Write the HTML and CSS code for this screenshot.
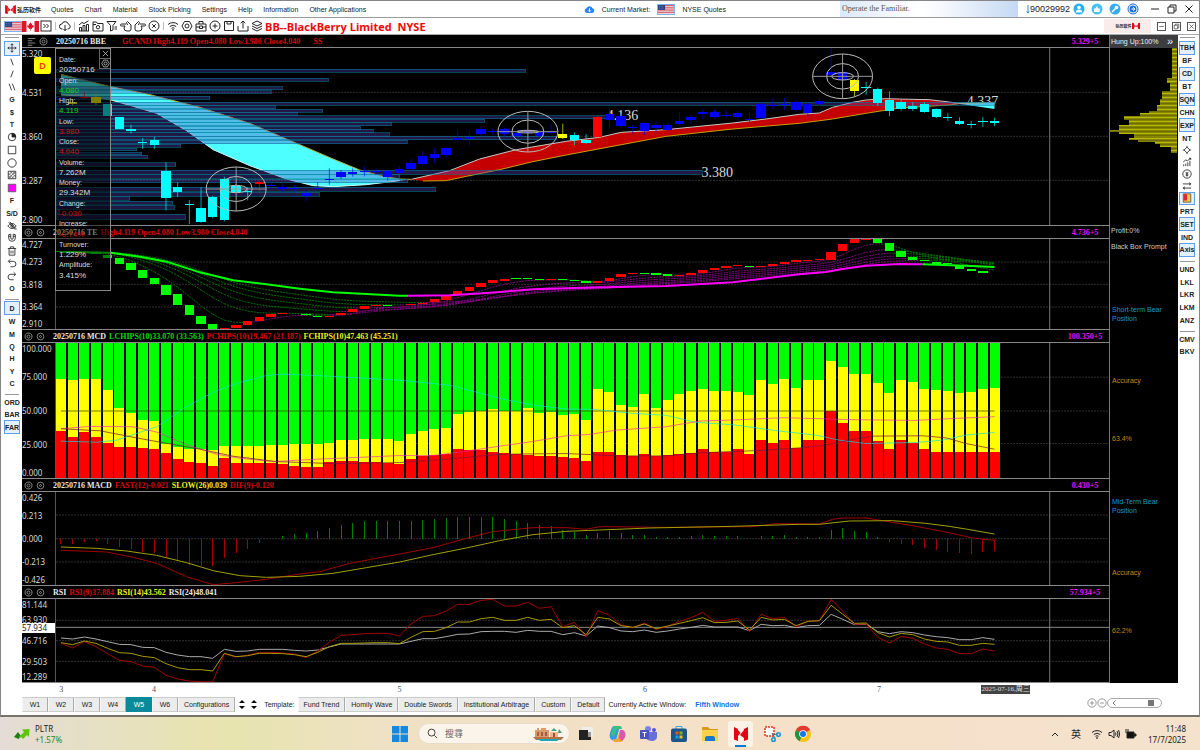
FILE: index.html
```
<!DOCTYPE html>
<html lang="en">
<head>
    <meta charset="UTF-8">
    <meta name="viewport" content="width=device-width, initial-scale=1.0">
    <title>BB--BlackBerry Limited</title>
    <link rel="stylesheet" href="styles.css">
</head>
<body>
    <svg class="symbols" aria-hidden="true">
        <symbol id="us" viewBox="0 0 18 10" preserveAspectRatio="none">
            <rect width="18" height="10" fill="#f4e9ea"/>
            <path d="M0 .5h18M0 2.5h18M0 4.5h18M0 6.5h18M0 8.5h18" stroke="#d0455a"/>
            <rect width="8" height="5.5" fill="#2d4486"/>
            <path d="M1 1.5h6M1 3.5h6" stroke="#8f9cc4" stroke-width=".6" stroke-dasharray="1 1"/>
        </symbol>
        <symbol id="ca" viewBox="0 0 17 10" preserveAspectRatio="none">
            <rect width="17" height="10" fill="#fff"/>
            <path d="M0 0h4.500v10h-4.500zM12.500 0h4.500v10h-4.500z" fill="#e0132b"/>
            <path d="M8.500 1l.8 1.600 1-.4-.3 1.800 1.500-.6-.2 1 .7.5-2 1.700.1.700-1.300-.2v1.700h-.6v-1.700l-1.300.2.1-.7-2-1.700.7-.5-.2-1 1.500.6-.3-1.800 1 .4z" fill="#e0132b"/>
        </symbol>
        <symbol id="logo" viewBox="0 0 12 10"><path d="M0 0l3 1v9l-3-.5zM9 1l3-1v10l-3-1zM3.500 2.500l2.500 3 2.500-3v5l-2.500-2-2.500 2z" fill="#e60012"/></symbol>
        <symbol id="more" viewBox="0 0 12 12"><rect x="1" y="1" width="10" height="10"/><path d="M3.500 4l2 2-2 2M6.500 4l2 2-2 2"/></symbol>
        <symbol id="cloud" viewBox="0 0 12 12"><path d="M3.500 9H3a2.500 2.500 0 0 1-.2-5 3.500 3.500 0 0 1 6.700.3A2.400 2.400 0 0 1 9 9h-.5M6 5v5.500M4.500 9L6 10.700 7.500 9"/></symbol>
        <symbol id="stats" viewBox="0 0 12 12"><path d="M1.500 11V7.500h2V11M5 11V5.500h2V11M8.500 11V4.500h2V11M1 5l3-2.500 2 1L10.500.8M1 11h10"/></symbol>
        <symbol id="folder" viewBox="0 0 12 12"><path d="M1 2h3.500l1 1.500H11V11H1zM1 4.500h3"/><circle cx="6" cy="7.200" r="1.700"/></symbol>
        <symbol id="funnel" viewBox="0 0 12 12"><path d="M1 1.500h9L7 5.500V10L4.500 11V5.500zM8.500 7h2.500M8.500 9h2.500"/></symbol>
        <symbol id="handl" viewBox="0 0 12 12"><path d="M6 4H1.500a1 1 0 0 0 0 2H5L4 8a3 3 0 0 0 3 3h2a2 2 0 0 0 2-2V5L7.500 1.500 6.500 2.500 7.500 5"/></symbol>
        <symbol id="handr" viewBox="0 0 12 12"><path d="M6 4h4.500a1 1 0 0 1 0 2H7l1 2a3 3 0 0 1-3 3H3a2 2 0 0 1-2-2V5l3.500-3.500 1 1L4.500 5"/></symbol>
        <symbol id="xcircle" viewBox="0 0 12 12"><circle cx="6" cy="6" r="5"/><path d="M4.200 4.200l3.600 3.600M7.800 4.200L4.200 7.800"/></symbol>
        <symbol id="pcircle" viewBox="0 0 12 12"><circle cx="6" cy="6" r="5"/><path d="M6 3.500v5M3.500 6h5"/></symbol>
        <symbol id="mcircle" viewBox="0 0 12 12"><circle cx="6" cy="6" r="5"/><path d="M3.500 6h5"/></symbol>
        <symbol id="wifi" viewBox="0 0 12 12"><path d="M1 4.500a7.500 7.500 0 0 1 10 0M2.800 6.500a5 5 0 0 1 6.400 0M4.500 8.300a2.400 2.400 0 0 1 3 0"/><circle cx="6" cy="10" r=".5"/></symbol>
        <symbol id="gear" viewBox="0 0 12 12"><path d="M3.500 1.500h5L11 6l-2.500 4.500h-5L1 6z"/><circle cx="6" cy="6" r="2"/></symbol>
        <symbol id="case" viewBox="0 0 12 12"><path d="M1 4h10v7H1zM4 4V1.500h4V4M1 7h3.500M7.500 7H11M4.500 6h3v2.500h-3z"/></symbol>
        <symbol id="save" viewBox="0 0 12 12"><path d="M1.500 1.500h9v9h-9zM4 1.500V4h4V1.500"/></symbol>
        <symbol id="export" viewBox="0 0 12 12"><path d="M1 6v5h10V6M6 8.500V1M3.700 3.200L6 1l2.300 2.200"/></symbol>
        <symbol id="layers" viewBox="0 0 12 12"><path d="M6 1l5 2.500L6 6 1 3.500zM1 6l5 2.500L11 6M1 8.500L6 11l5-2.500"/></symbol>
        <symbol id="move" viewBox="0 0 12 12"><path d="M6 1v10M1 6h10M4.500 2.500L6 1l1.500 1.500M4.500 9.500L6 11l1.500-1.500M2.500 4.500L1 6l1.500 1.500M9.500 4.500L11 6 9.500 7.500"/></symbol>
        <symbol id="bslash" viewBox="0 0 12 12"><path d="M4.500 2l3 8"/></symbol>
        <symbol id="fslash" viewBox="0 0 12 12"><path d="M7.500 2l-3 8"/></symbol>
        <symbol id="slashes" viewBox="0 0 12 12"><path d="M2.500 2l3 8M6.500 2l3 8"/></symbol>
        <symbol id="pie" viewBox="0 0 12 12"><circle cx="6" cy="6" r="4.500"/><path d="M6 1.500V6h4.500a4.500 4.500 0 0 0-4.500-4.500z" fill="#222"/></symbol>
        <symbol id="square" viewBox="0 0 12 12"><path d="M1.500 1.500h9v9h-9z"/></symbol>
        <symbol id="circle" viewBox="0 0 12 12"><circle cx="6" cy="6" r="5"/></symbol>
        <symbol id="hatch" viewBox="0 0 12 12"><path d="M1.500 1.500h9v9h-9z"/><path stroke-width=".7" d="M2 4l6 6M2 7l3 3M4 2l6 6M7 2l3 3M2 6l4-4M2 10l8-8M6 10l4-4"/></symbol>
        <symbol id="fill" viewBox="0 0 12 12"><path d="M1.500 1.500h9v9h-9z" fill="#f0f" stroke="#555"/></symbol>
        <symbol id="eye" viewBox="0 0 12 12"><path d="M1 6c3-4 7-4 10 0-3 4-7 4-10 0zM2 1.500l8 9M3.500 1l8 9"/><circle cx="6" cy="6" r="1.500"/></symbol>
        <symbol id="magnet" viewBox="0 0 12 12"><path d="M2 2l2.500-.5V6a1.500 1.500 0 0 0 3 0V1.500L10 2v4a4 4 0 0 1-8 0zM2 4h2.500M7.500 4H10"/></symbol>
        <symbol id="trash" viewBox="0 0 12 12"><path d="M1 3h10M4 3V1h4v2M2.500 3v8h7V3M4.800 5.500v3.500M7.200 5.500v3.500"/></symbol>
        <symbol id="undo" viewBox="0 0 12 12"><path d="M4 1.500L1.500 4 4 6.500M2 4h5.500a3 3 0 0 1 0 6.500H4"/></symbol>
        <symbol id="redo" viewBox="0 0 12 12"><path d="M8 1.500L10.500 4 8 6.500M10 4H4.500a3 3 0 0 0 0 6.500H8"/></symbol>
        <symbol id="diamond" viewBox="0 0 12 12"><path d="M6 1v2M6 9v2M1 6h2M9 6h2M6 2.500L2.500 6 6 9.500 9.500 6z"/></symbol>
        <symbol id="trend" viewBox="0 0 12 12"><path d="M2 11V9M4.500 11V8M7 11V6.500M9.500 11V4.500M1.500 6l3-2.500 2 1 4-3M8.500 1.500h2v2"/></symbol>
        <symbol id="coin" viewBox="0 0 12 12"><circle cx="6" cy="6" r="5"/><path d="M4.500 3.500L6 5.500l1.500-2M6 5.500V9M4.500 6h3M4.500 7.500h3"/></symbol>
        <symbol id="swap" viewBox="0 0 12 12"><path d="M1 3.500h10M8.500 2l2 1.500-2 1.500M11 8.500H1M3.500 7l-2 1.500 2 1.500"/></symbol>
        <symbol id="news" viewBox="0 0 12 12"><path d="M1.500 1h9v10h-9z" fill="#f7c93c" stroke="#555"/><path d="M2 1.500h4v7.500H2z" fill="#e0252c" stroke="none"/></symbol>
        <symbol id="list" viewBox="0 0 12 12"><path d="M1 2h10M1 5h6M1 8h10M1 11h6"/></symbol>
        <symbol id="ring" viewBox="0 0 12 12"><path d="M4 1.500h4L10.500 4v4L8 10.500H4L1.500 8V4z"/><circle cx="6" cy="6" r="2"/></symbol>
        <symbol id="dot" viewBox="0 0 12 12"><circle cx="6" cy="6" r="4.500"/><circle cx="6" cy="6" r="1.300"/></symbol>
        <symbol id="min" viewBox="0 0 12 12"><path d="M2 6h8"/></symbol>
        <symbol id="restore" viewBox="0 0 12 12"><path d="M2 4h6v6H2zM4 4V2h6v6H8"/></symbol>
        <symbol id="close" viewBox="0 0 12 12"><path d="M2.500 2.500l7 7M9.500 2.500l-7 7"/></symbol>
    </svg>

    <div class="window">
        <header class="menubar">
            <div class="brand"><svg class="brand-mark"><use href="#logo"/></svg><span>弘历软件</span></div>
            <nav class="menu">
                <a href="#">Quotes</a>
                <a href="#">Chart</a>
                <a href="#">Material</a>
                <a href="#">Stock Picking</a>
                <a href="#">Settings</a>
                <a href="#">Help</a>
                <a href="#">Information</a>
                <a href="#">Other Applications</a>
            </nav>
            <div class="market">
                <svg class="market-cloud" viewBox="0 0 12 10"><path d="M3 9a2.700 2.700 0 0 1-.3-5.300 3.500 3.500 0 0 1 6.600 0A2.700 2.700 0 0 1 9 9z" fill="#2a86f0"/><path d="M6 3.500v4M4.500 6L6 7.500 7.500 6" stroke="#fff" fill="none"/></svg>
                <span>Current Market:</span>
                <svg class="flag framed"><use href="#us"/></svg>
                <span>NYSE Quotes</span>
            </div>
            <div class="ticker">Operate the Familiar.</div>
            <div class="account">
                <svg class="pin" viewBox="0 0 4 10"><path d="M2 0v9M.5 7L2 9l1.500-2" stroke="#2a86d0" fill="none"/></svg>
                <span>90029992</span>
                <button type="button" class="round" aria-label="User"><svg viewBox="0 0 12 12"><circle cx="6" cy="6" r="5.500" fill="#27b1f2"/><circle cx="6" cy="4.500" r="1.800" fill="#fff"/><path d="M2.800 9.500a3.200 3 0 0 1 6.400 0z" fill="#fff"/></svg></button>
                <button type="button" class="round" aria-label="Favourites"><svg viewBox="0 0 12 12"><circle cx="6" cy="6" r="5.500" fill="#45c3f5"/><path d="M3 5.500h1.500L6 3l1 2.500h2L8.500 9H3z" fill="#fff"/></svg></button>
                <button type="button" class="round" aria-label="Tools"><svg viewBox="0 0 12 12"><circle cx="6" cy="6" r="5.500" fill="#35aef0"/><path d="M3 9l3.500-3.500" stroke="#fff" stroke-width="1.500"/><circle cx="7.500" cy="4.500" r="1.800" fill="#fff"/></svg></button>
                <button type="button" class="round" aria-label="Support"><svg viewBox="0 0 12 12"><circle cx="6" cy="6" r="5" fill="#fff" stroke="#1568d8"/><circle cx="6" cy="6" r="3.500" fill="#1a72e0"/><path d="M4.500 6h3M6 4.500c2 0 2 3 0 3" stroke="#fff" fill="none"/></svg></button>
            </div>
            <div class="window-buttons">
                <button type="button" aria-label="Minimise"><svg class="ico"><use href="#min"/></svg></button>
                <button type="button" aria-label="Restore"><svg class="ico"><use href="#restore"/></svg></button>
                <button type="button" aria-label="Close"><svg class="ico"><use href="#close"/></svg></button>
            </div>
        </header>

        <div class="toolbar">
            <svg class="flag framed"><use href="#us"/></svg>
            <svg class="flag"><use href="#ca"/></svg>
            <button type="button" aria-label="More"><svg class="ico"><use href="#more"/></svg></button>
            <i class="sep"></i>
            <button type="button" aria-label="Download"><svg class="ico"><use href="#cloud"/></svg></button>
            <i class="sep"></i>
            <button type="button" aria-label="Statistics"><svg class="ico"><use href="#stats"/></svg></button>
            <button type="button" aria-label="Folder"><svg class="ico"><use href="#folder"/></svg></button>
            <button type="button" aria-label="Filter"><svg class="ico"><use href="#funnel"/></svg></button>
            <button type="button" aria-label="Back"><svg class="ico"><use href="#handl"/></svg></button>
            <button type="button" aria-label="Forward"><svg class="ico"><use href="#handr"/></svg></button>
            <button type="button" aria-label="Cancel"><svg class="ico"><use href="#xcircle"/></svg></button>
            <i class="sep"></i>
            <button type="button" aria-label="Signal"><svg class="ico"><use href="#wifi"/></svg></button>
            <button type="button" aria-label="Options"><svg class="ico"><use href="#gear"/></svg></button>
            <button type="button" aria-label="Portfolio"><svg class="ico"><use href="#case"/></svg></button>
            <button type="button" aria-label="Add"><svg class="ico"><use href="#pcircle"/></svg></button>
            <button type="button" aria-label="Save"><svg class="ico"><use href="#save"/></svg></button>
            <button type="button" aria-label="Export"><svg class="ico"><use href="#export"/></svg></button>
            <button type="button" aria-label="Layers"><svg class="ico"><use href="#layers"/></svg></button>
            <h1>BB--BlackBerry Limited <span>NYSE</span></h1>
            <div class="badge"><span>弘历软件</span><svg class="badge-mark"><use href="#logo"/></svg></div>
            <div class="mdi">
                <button type="button" aria-label="Minimise chart"><svg class="ico"><use href="#min"/></svg></button>
                <button type="button" aria-label="Restore chart"><svg class="ico"><use href="#restore"/></svg></button>
                <button type="button" aria-label="Close chart"><svg class="ico"><use href="#close"/></svg></button>
            </div>
        </div>

        <div class="work">
            <aside class="rail">
                <i class="grip"></i>
                <div class="group group-20">
                    <button type="button" class="on" aria-label="Move"><svg class="ico"><use href="#move"/></svg></button>
                    <button type="button" aria-label="Line down"><svg class="ico"><use href="#bslash"/></svg></button>
                    <button type="button" aria-label="Line up"><svg class="ico"><use href="#fslash"/></svg></button>
                    <button type="button" aria-label="Parallel lines"><svg class="ico"><use href="#slashes"/></svg></button>
                    <button type="button">G</button>
                    <button type="button">$</button>
                    <button type="button">T</button>
                    <button type="button" aria-label="Cycle"><svg class="ico"><use href="#pie"/></svg></button>
                    <button type="button" aria-label="Rectangle"><svg class="ico"><use href="#square"/></svg></button>
                    <button type="button" aria-label="Circle"><svg class="ico"><use href="#circle"/></svg></button>
                    <button type="button" aria-label="Hatch"><svg class="ico"><use href="#hatch"/></svg></button>
                    <button type="button" aria-label="Colour"><svg class="ico"><use href="#fill"/></svg></button>
                    <button type="button">F</button>
                    <button type="button">S/D</button>
                    <button type="button" aria-label="Hide"><svg class="ico"><use href="#eye"/></svg></button>
                    <button type="button" aria-label="Magnet"><svg class="ico"><use href="#magnet"/></svg></button>
                    <button type="button" aria-label="Delete"><svg class="ico"><use href="#trash"/></svg></button>
                    <button type="button" aria-label="Undo"><svg class="ico"><use href="#undo"/></svg></button>
                    <button type="button" aria-label="Redo"><svg class="ico"><use href="#redo"/></svg></button>
                    <button type="button">O</button>
                </div>
                <i class="rule"></i>
                <div class="group group-7">
                    <button type="button" class="on">D</button>
                    <button type="button">W</button>
                    <button type="button">M</button>
                    <button type="button">Q</button>
                    <button type="button">H</button>
                    <button type="button">Y</button>
                    <button type="button">C</button>
                </div>
                <i class="rule"></i>
                <div class="group group-3">
                    <button type="button">ORD</button>
                    <button type="button">BAR</button>
                    <button type="button" class="on">FAR</button>
                </div>
            </aside>

            <main class="charts">
                <section class="pane pane-price">
                    <div class="legend">
                        <svg class="ico"><use href="#list"/></svg><svg class="ico"><use href="#ring"/></svg>
                        <b class="white symbol">20250716 BBE</b><b class="red">GCAND High4.119 Open4.080 Low3.980 Close4.040</b><b class="red ss">SS</b>
                        <b class="scale">5.329+5</b>
                    </div>
                    <div class="body">
                        <div class="axis"><span>5.320</span><span>4.531</span><span>3.860</span><span>3.287</span><span>2.800</span></div>
                        <div class="plot">
                            <span class="price" style="left:52.300%;top:34%">4.136</span>
                            <span class="price" style="left:61.300%;top:66%">3.380</span>
                            <span class="price" style="left:86.500%;top:26%">4.337</span>
                            <svg id="price" viewBox="168 147 3162 531" preserveAspectRatio="none"></svg>
                        </div>
                    </div>
                </section>
                <section class="pane pane-te">
                    <div class="legend">
                        <svg class="ico"><use href="#ring"/></svg><svg class="ico"><use href="#dot"/></svg>
                        <b class="white">20250716 TE</b><b class="red">High4.119 Open4.080 Low3.980 Close4.040</b>
                        <b class="scale">4.736+5</b>
                    </div>
                    <div class="body">
                        <div class="axis"><span>4.727</span><span>4.273</span><span>3.818</span><span>3.364</span><span>2.910</span></div>
                        <div class="plot"><svg id="te" viewBox="168 27 3162 270" preserveAspectRatio="none"></svg></div>
                    </div>
                </section>
                <section class="pane pane-mcd">
                    <div class="legend">
                        <svg class="ico"><use href="#ring"/></svg><svg class="ico"><use href="#dot"/></svg>
                        <b class="white">20250716 MCD</b><b class="green">LCHIPS(10)33.070 (33.563)</b><b class="red">PCHIPS(10)19.467 (21.187)</b><b class="yellow">FCHIPS(10)47.463 (45.251)</b>
                        <b class="scale">100.350+5</b>
                    </div>
                    <div class="body">
                        <div class="axis"><span>100.000</span><span>75.000</span><span>50.000</span><span>25.000</span><span>0.000</span></div>
                        <div class="plot"><svg id="mcd" viewBox="168 340 3162 403" preserveAspectRatio="none"></svg></div>
                    </div>
                </section>
                <section class="pane pane-macd">
                    <div class="legend">
                        <svg class="ico"><use href="#ring"/></svg><svg class="ico"><use href="#dot"/></svg>
                        <b class="white">20250716 MACD</b><b class="red">FAST(12)-0.021</b><b class="yellow">SLOW(26)0.039</b><b class="red">DIF(9)-0.120</b>
                        <b class="scale">0.430+5</b>
                    </div>
                    <div class="body">
                        <div class="axis"><span>0.426</span><span>0.213</span><span>0.000</span><span>-0.213</span><span>-0.426</span></div>
                        <div class="plot"><svg id="macd" viewBox="168 36 3162 279" preserveAspectRatio="none"></svg></div>
                    </div>
                </section>
                <section class="pane pane-rsi">
                    <div class="legend">
                        <svg class="ico"><use href="#ring"/></svg><svg class="ico"><use href="#dot"/></svg>
                        <b class="white">RSI</b><b class="red">RSI(9)37.884</b><b class="yellow">RSI(14)43.562</b><b class="white">RSI(24)48.041</b>
                        <b class="scale">57.934+5</b>
                    </div>
                    <div class="body">
                        <div class="axis"><span>81.144</span><span>63.930</span><span>46.716</span><span>29.503</span><span>12.289</span><em>57.934</em></div>
                        <div class="plot"><svg id="rsi" viewBox="168 357 3162 249" preserveAspectRatio="none"></svg></div>
                    </div>
                </section>

                <button type="button" class="period">D</button>
                <div class="info">
                    <div class="info-buttons">
                        <button type="button" aria-label="Close info"><svg class="ico"><use href="#close"/></svg></button>
                        <button type="button" aria-label="Info settings"><svg class="ico"><use href="#gear"/></svg></button>
                    </div>
                    <dl>
                        <dt>Date:</dt><dd>20250716</dd>
                        <dt>Open:</dt><dd class="up">4.080</dd>
                        <dt>High:</dt><dd class="up">4.119</dd>
                        <dt>Low:</dt><dd class="down">3.980</dd>
                        <dt>Close:</dt><dd class="down">4.040</dd>
                        <dt>Volume:</dt><dd>7.262M</dd>
                        <dt>Money:</dt><dd>29.342M</dd>
                        <dt>Change:</dt><dd class="down">-0.030</dd>
                        <dt>Increase:</dt><dd class="down">-0.74%</dd>
                        <dt>Turnover:</dt><dd>1.229%</dd>
                        <dt>Amplitude:</dt><dd>3.415%</dd>
                    </dl>
                </div>
            </main>

            <aside class="side">
                <div class="hung"><span>Hung Up:100%</span><span class="chev">»</span></div>
                <svg id="profile" class="profile" viewBox="933 147 200 531" preserveAspectRatio="none"></svg>
                <div class="notes">
                    <p>Profit:0%</p>
                    <p>Black Box Prompt</p>
                    <p class="blue short">Short-term Bear Position</p>
                    <p class="orange accuracy">Accuracy</p>
                    <p class="orange rate">63.4%</p>
                    <p class="blue mid">Mid-Term Bear Position</p>
                    <p class="orange accuracy">Accuracy</p>
                    <p class="orange rate">62.2%</p>
                </div>
            </aside>

            <aside class="rail rail-right">
                <i class="grip"></i>
                <div class="group group-17">
                    <button type="button" class="on">TBH</button>
                    <button type="button">BF</button>
                    <button type="button" class="on">CD</button>
                    <button type="button">BT</button>
                    <button type="button" class="on">SQN</button>
                    <button type="button">CHN</button>
                    <button type="button" class="on">EXP</button>
                    <button type="button">NT</button>
                    <button type="button" aria-label="Diamond"><svg class="ico"><use href="#diamond"/></svg></button>
                    <button type="button" aria-label="Trend"><svg class="ico"><use href="#trend"/></svg></button>
                    <button type="button" aria-label="Capital"><svg class="ico"><use href="#coin"/></svg></button>
                    <button type="button" aria-label="Swap"><svg class="ico"><use href="#swap"/></svg></button>
                    <button type="button" class="on" aria-label="News"><svg class="ico"><use href="#news"/></svg></button>
                    <button type="button">PRT</button>
                    <button type="button" class="on">SET</button>
                    <button type="button">IND</button>
                    <button type="button" class="on">Axis</button>
                </div>
                <i class="rule"></i>
                <div class="group group-5">
                    <button type="button">UND</button>
                    <button type="button">LKL</button>
                    <button type="button">LKR</button>
                    <button type="button">LKM</button>
                    <button type="button">ANZ</button>
                </div>
                <i class="rule"></i>
                <div class="group group-2">
                    <button type="button">CMV</button>
                    <button type="button">BKV</button>
                </div>
            </aside>
        </div>

        <div class="dates">
            <span style="left:.300%">3</span>
            <span style="left:9.100%">4</span>
            <span style="left:32.400%">5</span>
            <span style="left:55.700%">6</span>
            <span style="left:77.900%">7</span>
            <time style="left:87.800%">2025-07-16,周三</time>
        </div>

        <footer class="bottom">
            <div class="tabs">
                <button type="button">W1</button>
                <button type="button">W2</button>
                <button type="button">W3</button>
                <button type="button">W4</button>
                <button type="button" class="current">W5</button>
                <button type="button">W6</button>
                <button type="button">Configurations</button>
            </div>
            <button type="button" class="spin" aria-label="Scroll tabs"><svg viewBox="0 0 6 9"><path d="M3 0l3 3H0zM3 9L0 6h6z"/></svg></button>
            <button type="button" class="spin" aria-label="Scroll templates"><svg viewBox="0 0 6 9"><path d="M3 0l3 3H0zM3 9L0 6h6z"/></svg></button>
            <span class="template">Template:</span>
            <div class="tabs">
                <button type="button">Fund Trend</button>
                <button type="button">Homily Wave</button>
                <button type="button">Double Swords</button>
                <button type="button">Institutional Arbitrage</button>
                <button type="button">Custom</button>
                <button type="button">Default</button>
            </div>
            <span class="active-label">Currently Active Window:</span>
            <a href="#" class="active-window">Fifth Window</a>
            <div class="zoomer">
                <button type="button" aria-label="Zoom in"><svg class="ico"><use href="#pcircle"/></svg></button>
                <button type="button" aria-label="Zoom out"><svg class="ico"><use href="#mcircle"/></svg></button>
                <div class="scroller">
                    <svg class="arrow" viewBox="0 0 4 6"><path d="M3.500.5L1 3l2.500 2.500"/></svg>
                    <input type="range" aria-label="Scroll chart" min="0" max="100" value="92">
                </div>
            </div>
        </footer>
    </div>

    <div class="taskbar">
        <div class="stock">
            <svg viewBox="0 0 16 12"><path d="M0 9l4-5 3 4-2.500 3z" fill="#1d7f1a"/><path d="M5 9l5-5-2-2.500 7.500-.5-.5 8-2-2-4 4-2-2-1 1z" fill="#5cc411"/></svg>
            <div>PLTR<br><span>+1.57%</span></div>
        </div>
        <div class="apps">
            <button type="button" aria-label="Start"><svg viewBox="0 0 18 18"><path d="M1 1h7.500v7.500H1zM9.500 1H17v7.500H9.500zM1 9.500h7.500V17H1zM9.500 9.500H17V17H9.500z" fill="#1488e0"/></svg></button>
            <label class="search">
                <svg class="lens" viewBox="0 0 12 12"><circle cx="5" cy="5" r="3.800"/><path d="M8 8l3 3"/></svg>
                <input type="text" placeholder="搜尋">
                <svg class="art" viewBox="0 0 32 16"><path d="M2 4h2v-2h2v2h2v-2h5v2h3v9H2z" fill="#d99a6c"/><path d="M4 6h2v4H4zM8 6h2v4H8zM12 6h2v4h-2z" fill="#a85a3c"/><path d="M17 6h8v5h-8z" fill="#e7b98b"/><path d="M18 5l3-3 3 3zM26 3l3 4h-4z" fill="#3f9e7c"/><path d="M20 7h2v4h-2z" fill="#b6443a"/><path d="M0 11h31l-3 3H3z" fill="#b57043"/><path d="M3 13h24l-3 2H8z" fill="#20a5b5"/></svg>
            </label>
            <button type="button" aria-label="Task view"><svg viewBox="0 0 18 18"><path d="M5 2h11v10H5z" fill="#eee"/><path d="M2 5h9v7h3v3H2z" fill="#222"/><path d="M11 7h3v5h-3z" fill="#999"/></svg></button>
            <button type="button" aria-label="Copilot"><svg viewBox="0 0 18 18"><path d="M6 1h6l-3 11c-1 4-3 4-5 3s-3-4-2-7 2-7 4-7z" fill="#2c9be8"/><path d="M6 1h6c1 0 2 1 2 3H9L6 12 3 9z" fill="#3fbf7c"/><path d="M12 17H7c-1 0-2-1-2-3h4l3-9 3 1c2 0 3 3 2 6s-3 5-5 5z" fill="#f2a23a"/><path d="M12 5h3c2 1 3 4 2 7l-3 4-3-3z" fill="#d957b3"/></svg></button>
            <button type="button" aria-label="Teams"><svg viewBox="0 0 18 18"><circle cx="9" cy="4" r="3" fill="#7b83eb"/><circle cx="15" cy="5" r="2" fill="#5059c9"/><path d="M7 7h11v5c0 3-4 4-4 4s-6 0-7-3z" fill="#6670d8"/><rect x="1" y="5" width="9" height="9" rx="1" fill="#4b53bc"/><path d="M3.500 7.500h4M5.500 7.500v4.500" stroke="#fff"/></svg></button>
            <button type="button" aria-label="Store"><svg viewBox="0 0 18 18"><path d="M6 4V1.500h6V4" fill="none" stroke="#38a5dc"/><rect x="1" y="3.500" width="16" height="13.500" rx="2" fill="#1b558c"/><path d="M5.500 6.500h3v3h-3z" fill="#f25022"/><path d="M9.500 6.500h3v3h-3z" fill="#7fba00"/><path d="M5.500 10.500h3v3h-3z" fill="#00a4ef"/><path d="M9.500 10.500h3v3h-3z" fill="#ffb900"/></svg></button>
            <button type="button" aria-label="Explorer"><svg viewBox="0 0 18 18"><path d="M1 2h6l2 2h8v5H1z" fill="#d79a1c"/><path d="M1 5h16v11H1z" fill="#fcd04b"/><path d="M4 16v-3c0-1 1-2 2-2h6c1 0 2 1 2 2v3z" fill="#1a78c8"/></svg></button>
            <button type="button" class="running" aria-label="Chart app"><svg viewBox="0 0 18 18"><path d="M2 2l4 2v12l-4-1.500zM16 2l-4 2v12l4-1.500z" fill="#e60012"/><path d="M6 5l2.500 3L6 11zM12 5L8 10l4 3z" fill="#e60012"/></svg></button>
            <button type="button" aria-label="Snipping tool"><svg viewBox="0 0 18 18"><path d="M2 2h9v9H2z" fill="#fff" stroke="#d32" stroke-width="1.500" stroke-dasharray="2 1"/><path d="M9 8l3 5M9 10l6-1" stroke="#666"/><circle cx="10.500" cy="14.500" r="1.800" fill="none" stroke="#1993d6" stroke-width="1.500"/><circle cx="15.500" cy="9.500" r="1.800" fill="none" stroke="#1993d6" stroke-width="1.500"/></svg></button>
            <button type="button" aria-label="Chrome"><svg viewBox="0 0 18 18"><circle cx="9" cy="9" r="8" fill="#fbc116"/><path d="M9 9L2 5a8 8 0 0 1 14 0z" fill="#e33b2e"/><path d="M9 9L5.500 16.200A8 8 0 0 1 2 5z" fill="#229342"/><path d="M9 1a8 8 0 0 1 7 4H9z" fill="#e33b2e"/><circle cx="9" cy="9" r="3.800" fill="#fff"/><circle cx="9" cy="9" r="3" fill="#1a73e8"/></svg></button>
        </div>
        <div class="tray">
            <svg class="ico" viewBox="0 0 12 12"><path d="M3 8l3-3 3 3"/></svg>
            <span class="ime">英</span>
            <svg class="ico"><use href="#wifi"/></svg>
            <svg class="ico" viewBox="0 0 12 12"><path d="M1 4.500h2L6 2v8L3 7.500H1zM7.500 4.500q1 1.500 0 3M9 3q2 3 0 6M10.500 2q2.500 4 0 8"/></svg>
            <svg class="ico" viewBox="0 0 12 12"><path d="M2 4h7v6H2zM9 6h2v2H9z" fill="#111"/><path d="M1 1v4M3 1v3"/></svg>
            <time>11:48<br>17/7/2025</time>
        </div>
    </div>

    <script src="charts.js"></script>
</body>
</html>
```
FILE: styles.css
```
* {
    box-sizing: border-box;
}

body {
    margin: 0;
    min-height: 100vh;
    display: flex;
    flex-direction: column;
    font-family: "Liberation Sans", Arial, sans-serif;
    font-size: 7px;
    color: #222;
    background: #fff;
}

button {
    margin: 0;
    padding: 0;
    border: 0;
    background: none;
    font: inherit;
    color: inherit;
    display: flex;
    align-items: center;
    justify-content: center;
}

a {
    color: inherit;
    text-decoration: none;
}

p {
    margin: 0;
}

.symbols {
    position: absolute;
    width: 0;
    height: 0;
}

.ico {
    width: 12px;
    height: 12px;
    flex: none;
    fill: none;
    stroke: #222;
    stroke-width: 1;
}

.window {
    flex: 1;
    display: flex;
    flex-direction: column;
    border: 1px solid #85858a;
    border-bottom: 2px solid #77726a;
}

/* Menu bar */
.menubar {
    height: 17px;
    display: flex;
    align-items: center;
    border-bottom: 1px solid #9a9a9a;
    padding-left: 4px;
    white-space: nowrap;
}

.brand {
    display: flex;
    align-items: center;
    gap: 1px;
    width: 46px;
    font: bold 6px "Noto Sans CJK SC", sans-serif;
}

.brand-mark {
    width: 11px;
    height: 9px;
}

.menu {
    flex: 1;
    display: flex;
    gap: 11px;
}

.market {
    display: flex;
    align-items: center;
    gap: 7px;
    margin-right: 114px;
}

.market-cloud {
    width: 11px;
    height: 9px;
}

.flag {
    width: 17px;
    height: 11px;
    flex: none;
}

.framed {
    width: 18px;
    border: 1px solid #7fb3ea;
}

.ticker {
    width: 178px;
    height: 16px;
    padding-left: 2px;
    background: linear-gradient(90deg, #dde9f9, #fff 45%, #f3f7fd 60%, #c5d9f3);
    font: 8px/15px "Liberation Serif", serif;
    color: #555;
}

.account {
    display: flex;
    align-items: center;
    margin-left: 8px;
    font-size: 9px;
}

.pin {
    width: 4px;
    height: 9px;
}

.round {
    width: 18px;
}

.round svg {
    width: 12px;
    height: 12px;
}

.window-buttons {
    display: flex;
    gap: 5px;
    margin: 0 4px 0 7px;
}

/* Toolbar */
.toolbar {
    height: 17px;
    display: flex;
    align-items: center;
    border-bottom: 1px solid #aaa;
    padding-left: 3px;
}

.toolbar > button {
    width: 14px;
}

.sep {
    width: 1px;
    height: 8px;
    margin: 0 2px;
    background: #bbb;
}

h1 {
    flex: 1;
    margin: 0 0 0 1px;
    font: bold 11px "Open Sans", sans-serif;
    color: #f00808;
    white-space: nowrap;
}

h1 span {
    margin-left: 3px;
}

.badge {
    width: 47px;
    height: 14px;
    display: flex;
    align-items: center;
    justify-content: center;
    background: #fbecec;
    font: bold 4px "Noto Sans CJK SC", sans-serif;
}

.badge-mark {
    width: 8px;
    height: 8px;
}

.mdi {
    display: flex;
    gap: 6px;
    margin: 0 3px 0 6px;
}

.mdi button {
    width: 9px;
    height: 9px;
    border: 1px solid #555;
}

.mdi .ico {
    width: 7px;
    height: 7px;
}

/* Tool rails */
.work {
    flex: 1;
    display: flex;
    min-height: 0;
}

.rail {
    width: 21px;
    flex: none;
    padding: 2px 2px 0 3px;
    font-weight: bold;
}

.rail-right {
    padding: 2px 3px 0 1px;
}

.grip,
.rule {
    display: block;
    height: 1px;
    margin: 0 1px;
    background: #999;
}

.grip {
    margin-bottom: 3px;
}

.rule {
    margin: 4px 1px 1px;
}

.group {
    display: flex;
    flex-direction: column;
}

.group button {
    flex: 1;
    width: 16px;
    min-height: 0;
}

.group .ico {
    width: 10px;
    height: 10px;
}

.group .on {
    background: #e3f0fd;
    border: 1px solid #5e9fe8;
}

.group-20 {
    height: 254px;
}

.group-17 {
    height: 216px;
}

.group-7 {
    height: 89px;
}

.group-5 {
    height: 64px;
}

.group-3 {
    height: 38px;
}

.group-2 {
    height: 25px;
}

/* Charts */
.charts {
    position: relative;
    flex: 1;
    display: flex;
    flex-direction: column;
    min-width: 0;
    background: #000;
    border-right: 1px solid #777;
}

.pane {
    display: flex;
    flex-direction: column;
    flex-basis: 13px;
    min-height: 0;
}

.pane-price {
    flex-grow: 178;
}

.pane-te {
    flex-grow: 91;
}

.pane-mcd {
    flex-grow: 136;
}

.pane-macd {
    flex-grow: 94;
}

.pane-rsi {
    flex-grow: 84;
}

.legend {
    height: 13px;
    flex: none;
    display: flex;
    align-items: center;
    gap: 3px;
    padding-left: 2px;
    border-bottom: 1px solid #888;
    font: bold 8px "Liberation Serif", serif;
    white-space: nowrap;
}

.legend .ico {
    width: 9px;
    height: 9px;
    stroke: #aaa;
}

.legend .ico + b {
    margin-left: 5px;
}

.pane-price .legend {
    padding-left: 5px;
}

.pane-price .symbol {
    width: 63px;
}

.ss {
    margin-left: 10px;
}

.scale {
    margin-left: auto;
    width: 46px;
    text-align: center;
    color: #e815e8;
    margin-right: 1px;
}

.white {
    color: #e8e8e8;
}

.red {
    color: #d40808;
}

.green {
    color: #08d808;
}

.yellow {
    color: #f0f020;
}

.body {
    flex: 1;
    min-height: 0;
    display: flex;
    border-bottom: 1px solid #888;
}

.axis {
    position: relative;
    width: 34px;
    flex: none;
    display: flex;
    flex-direction: column;
    border-right: 1px solid #555;
    font: 8px/11px "Noto Sans", sans-serif;
    color: #d8d8d8;
}

.axis span {
    flex: 2 1 0;
    min-height: 0;
    display: flex;
    align-items: center;
}

.axis span:first-child {
    flex-grow: 1;
    align-items: flex-start;
}

.axis span:nth-child(5) {
    flex-grow: 1;
    align-items: flex-end;
}

.axis em {
    position: absolute;
    left: 0;
    top: 29%;
    width: 33px;
    height: 10px;
    background: #fff;
    color: #222;
    font-style: normal;
    line-height: 10px;
}

.plot {
    position: relative;
    flex: 1;
    min-width: 0;
    overflow: hidden;
}

.plot svg {
    position: absolute;
    width: 100%;
    height: 100%;
}

.plot svg * {
    vector-effect: non-scaling-stroke;
}

.price {
    position: absolute;
    font: 14px/15px "Liberation Serif", serif;
    color: #d8d8d8;
}

.period {
    position: absolute;
    left: 12px;
    top: 22px;
    width: 17px;
    height: 17px;
    border-radius: 2px;
    background: #ff0;
    color: #f04000;
    font-weight: bold;
    font-size: 9px;
}

/* Floating quote box over the first panes */
.info {
    position: absolute;
    left: 33px;
    top: 13px;
    width: 56px;
    height: 243px;
    padding: 6px 0 9px 3px;
    border: 1px solid #888;
    background: rgba(0, 0, 0, .5);
    color: #ddd;
}

.info dl {
    height: 100%;
    margin: 0;
    display: flex;
    flex-direction: column;
}

.info dt,
.info dd {
    flex: 1;
    margin: 0;
    min-height: 0;
    line-height: 10px;
}

.info dd {
    font-size: 8px;
}

.info .up {
    color: #08d808;
}

.info .down {
    color: #d01010;
}

.info-buttons {
    position: absolute;
    right: 0;
    top: 0;
}

.info-buttons button {
    width: 11px;
    height: 10px;
    border: 1px solid #666;
    border-width: 0 0 1px 1px;
}

.info-buttons .ico {
    width: 9px;
    height: 9px;
    stroke: #ccc;
}

/* Side panel */
.side {
    width: 68px;
    flex: none;
    display: flex;
    flex-direction: column;
    background: #000;
    color: #ccc;
    line-height: 9px;
}

.hung {
    height: 13px;
    display: flex;
    align-items: center;
    justify-content: space-between;
    padding: 0 5px 0 1px;
    background: #3d3d3f;
    color: #eee;
    white-space: nowrap;
}

.chev {
    font-size: 11px;
}

.profile {
    width: 67px;
    height: 178px;
    flex: none;
}

.notes p {
    padding: 0 1px;
    margin-bottom: 7px;
    white-space: nowrap;
}

.notes .blue,
.notes .orange {
    padding-left: 2px;
    white-space: normal;
}

.blue {
    color: #1d96cc;
}

.orange {
    color: #c8860a;
}

.notes .short,
.notes .mid {
    margin: 54px 8px 53px 0;
}

.notes .accuracy {
    margin-bottom: 49px;
}

/* Date scale */
.dates {
    position: relative;
    height: 14px;
    margin: 0 89px 0 55px;
    font: 8px/9px "Liberation Serif", "Noto Sans CJK TC", serif;
    color: #456;
}

.dates span,
.dates time {
    position: absolute;
    top: 2px;
}

.dates time {
    width: 49px;
    height: 9px;
    background: #444;
    color: #ddd;
    font-size: 7px;
    white-space: nowrap;
    overflow: hidden;
}

/* Window tabs */
.bottom {
    height: 18px;
    display: flex;
    align-items: flex-start;
    padding-left: 21px;
    line-height: 15px;
    white-space: nowrap;
}

.tabs {
    display: flex;
}

.tabs button {
    min-width: 26px;
    height: 15px;
    padding: 0 5px;
    background: #ececec;
    border: 1px solid #ccc;
    border-left-color: #f8f8f8;
    border-right-color: #aaa;
}

.tabs .current {
    background: #088a9a;
    border-color: #088a9a;
    color: #fff;
}

.spin {
    width: 12px;
    height: 15px;
}

.spin:first-of-type {
    margin-left: 1px;
}

.spin svg {
    width: 6px;
    height: 9px;
}

.template {
    margin: 0 3px 0 4px;
}

.active-label {
    margin-left: 3px;
}

.active-window {
    margin-left: 9px;
    color: #0a74e8;
    font-weight: bold;
}

.zoomer {
    margin: 0 37px 0 auto;
    display: flex;
    align-items: center;
    height: 11px;
}

.zoomer .ico {
    width: 10px;
    height: 10px;
    stroke: #888;
}

.scroller {
    width: 55px;
    height: 10px;
    display: flex;
    align-items: center;
    padding: 0 4px;
    border: 1px solid #aaa;
    border-radius: 5px;
    background: #fff;
}

.arrow {
    width: 4px;
    height: 6px;
    fill: none;
    stroke: #777;
}

.scroller input {
    appearance: none;
    flex: 1;
    min-width: 0;
    height: 6px;
    margin: 0;
    background: none;
}

.scroller input::-webkit-slider-thumb {
    appearance: none;
    width: 6px;
    height: 6px;
    background: #777;
}

/* Taskbar */
.taskbar {
    height: 33px;
    flex: none;
    display: grid;
    grid-template-columns: 1fr auto 1fr;
    align-items: center;
    background: linear-gradient(90deg, #e4dcd6, #e8e3b0 17%, #e7e4b0 20%, #efe1c4 32%, #f5e0c8 60%, #f5e2cd);
}

.stock {
    display: flex;
    align-items: center;
    gap: 5px;
    padding-left: 14px;
    font: 8px/11px "Noto Sans", sans-serif;
}

.stock svg {
    width: 16px;
    height: 12px;
}

.stock span {
    color: #1b8a1b;
}

.apps {
    display: flex;
    align-items: center;
}

.apps button {
    width: 31px;
    height: 26px;
    border-radius: 3px;
}

.apps button:first-child {
    width: 36px;
}

.apps button svg {
    width: 18px;
    height: 18px;
}

.apps .running {
    width: 25px;
    margin: 0 3px;
    background: linear-gradient(#0b7bd0, #0b7bd0) center bottom / 11px 2px no-repeat, #fcf3e8;
}

.search {
    width: 152px;
    height: 21px;
    display: flex;
    align-items: center;
    padding: 0 4px 0 8px;
    border-radius: 11px;
    background: #fbf4ea;
    border: 1px solid #e8dcc8;
}

.lens {
    width: 11px;
    height: 11px;
    fill: none;
    stroke: #333;
}

.search input {
    flex: 1;
    min-width: 0;
    border: 0;
    padding: 0 7px;
    background: none;
    font: 9px "Noto Sans CJK TC", sans-serif;
}

.search input::placeholder {
    color: #666;
}

.art {
    width: 32px;
    height: 16px;
}

.tray {
    display: flex;
    align-items: center;
    justify-content: flex-end;
    gap: 5px;
    padding-right: 14px;
    font: 8px/11px "Noto Sans", sans-serif;
    text-align: right;
}

.tray time {
    margin-left: 6px;
}

.ime {
    margin: 0 5px;
    font: 10px "Noto Sans CJK TC", sans-serif;
}
```
FILE: charts.js
```
const NS = 'http://www.w3.org/2000/svg';
const STEP = 35.04;
const x = i => 183 + STEP * i;

function add(svg, name, attrs) {
    const el = document.createElementNS(NS, name);
    for (const key in attrs) el.setAttribute(key, attrs[key]);
    svg.appendChild(el);
}

function line(svg, points, stroke, width = 1, extra = {}) {
    add(svg, 'polyline', { points, fill: 'none', stroke, 'stroke-width': width, ...extra });
}

function rect(svg, left, top, width, height, fill, extra = {}) {
    add(svg, 'rect', { x: left, y: top, width, height, fill, 'shape-rendering': 'crispEdges', ...extra });
}

function grid(svg, rows) {
    rows.forEach(y => line(svg, `168,${y} 3330,${y}`, '#2e2e2e', 1, { 'stroke-dasharray': '2 1' }));
    line(svg, '3152,0 3152,800', '#777');
}

const series = values => values.map((v, i) => `${x(i)},${v}`).join(' ');

// Price pane
const price = document.getElementById('price');
grid(price, [280, 412, 544]);

const cyanTop = '183,226 333,263 450,287 600,325 750,373 900,437 1000,480 1080,513 1150,532 1200,540 1234,541';
const cyanLow = '1200,545 1100,557 1000,563 940,560 860,540 750,500 640,452 560,395 470,343 400,322 333,303 260,292 183,288';
const redTop = '1235,541 1350,515 1440,480 1550,452 1700,427 1800,415 1865,400 2000,392 2200,372 2300,360 2400,346 2460,342 2500,325 2560,310 2600,303 2660,299 2700,300 2790,302 2850,309 2880,313';
const redLow = '2880,314 2850,318 2700,327 2600,343 2500,360 2400,373 2200,390 2000,412 1850,440 1700,468 1600,488 1500,512 1400,532 1340,545 1270,546';
add(price, 'polygon', { points: cyanTop + ' ' + cyanLow, fill: '#4dffff' });
add(price, 'polygon', { points: redTop + ' ' + redLow, fill: '#c40000' });
add(price, 'polygon', { points: '2850,311 2986,311 2986,330 2900,317', fill: '#4dffff' });
line(price, cyanTop, '#b8b040');
line(price, cyanLow, '#c8f8f8');
line(price, redTop, '#c8c8c8');
line(price, redLow, '#c8a000');
line(price, '2880,313 2986,310', '#e0e060');

// Chips by price level: top, bottom, right end
[[211, 220, 1577], [238, 247, 986], [263, 272, 847], [275, 283, 815], [291, 300, 629], [310, 319, 2986],
 [320, 329, 826], [330, 339, 969], [340, 349, 893], [350, 359, 1820], [360, 370, 1455], [371, 380, 1175],
 [381, 390, 1082], [391, 400, 1121], [401, 411, 1168], [412, 422, 1670], [423, 434, 1222], [435, 444, 542],
 [447, 455, 410], [459, 467, 425], [469, 478, 442], [491, 502, 527], [514, 525, 2108], [527, 537, 1200],
 [540, 551, 1225], [564, 577, 1307], [579, 591, 958], [593, 603, 390], [606, 616, 518], [619, 630, 523],
 [632, 644, 180], [646, 661, 556]
].forEach(([top, bottom, end]) => {
    rect(price, 168, top, end - 168, bottom - top, 'rgba(88,67,194,.36)', { stroke: 'rgba(0,125,150,.55)' });
});

const COLORS = { b: '#0000ff', y: '#ffff00', r: '#ff0000', c: '#00ffff', g: '#00ff00' };
// body top, body bottom, wick top, wick bottom
const candles = [
    [298, 301, 290, 305], [308, 316, 300, 320], [293, 297, 281, 302], [293, 312, 284, 318], [315, 350, 315, 350],
    [355, 390, 355, 390], [391, 395, 377, 404], [429, 433, 417, 450], [424, 438, 413, 450], [515, 598, 490, 634],
    [564, 580, 550, 594], [614, 618, 603, 675], [628, 668, 565, 671], [594, 654, 590, 658], [541, 663, 533, 667],
    [560, 578, 555, 582], [577, 580, 565, 604], [549, 556, 545, 582], [557, 560, 545, 570], [564, 570, 553, 580],
    [568, 571, 558, 578], [582, 592, 575, 606], [568, 571, 550, 574], [540, 543, 508, 557], [518, 535, 514, 540],
    [520, 526, 508, 533], [516, 518, 502, 532], [516, 520, 506, 528], [515, 535, 512, 545], [509, 521, 503, 523],
    [492, 511, 480, 518], [470, 496, 456, 500], [465, 477, 448, 492], [447, 467, 443, 478], [418, 423, 392, 428],
    [413, 419, 396, 438], [391, 405, 382, 411], [397, 400, 388, 408], [391, 406, 385, 412], [402, 411, 396, 416],
    [394, 403, 390, 408], [400, 412, 392, 416], [398, 401, 374, 408], [405, 418, 374, 420], [408, 422, 400, 438],
    [423, 433, 405, 435], [353, 414, 348, 416], [345, 362, 330, 388], [351, 382, 345, 385], [384, 387, 378, 405],
    [373, 396, 368, 408], [377, 388, 370, 397], [378, 393, 372, 396], [366, 374, 340, 378], [354, 363, 348, 375],
    [339, 346, 332, 360], [339, 353, 333, 359], [348, 352, 334, 355], [342, 353, 336, 365], [360, 363, 337, 370],
    [315, 357, 310, 360], [317, 321, 298, 330], [316, 318, 297, 332], [309, 334, 304, 338], [316, 342, 310, 354],
    [306, 315, 297, 320], [219, 228, 147, 232], [220, 243, 215, 246], [244, 276, 240, 293], [264, 267, 248, 287],
    [269, 313, 266, 321], [303, 335, 277, 352], [310, 329, 302, 335], [320, 330, 310, 336], [314, 339, 310, 341],
    [331, 354, 328, 357], [354, 357, 343, 366], [367, 374, 355, 378], [374, 377, 366, 388], [366, 370, 354, 384],
    [365, 372, 356, 381]
];
const candleColors = 'byryccccccccccccc' + 'r' + 'b'.repeat(25) + 'yccr' + 'b'.repeat(21) + 'y' + 'c'.repeat(12);
candles.forEach(([top, bottom, high, low], i) => {
    const color = COLORS[candleColors[i]];
    line(price, `${x(i)},${high} ${x(i)},${low}`, color, 1, { opacity: .65 });
    rect(price, x(i) - 14, top, 28, bottom - top, color);
});

[[709, 570, 66, 11], [1585, 398, 61, 4], [2530, 232, 67, 11]].forEach(([cx, cy, ry, eye]) => {
    const ring = { cx, cy, fill: 'none', stroke: '#bbb' };
    add(price, 'ellipse', { ...ring, rx: 90, ry });
    add(price, 'ellipse', { ...ring, rx: 48, ry: ry * .57 });
    add(price, 'ellipse', { ...ring, rx: 33, ry: eye });
    line(price, `${cx - 90},${cy} ${cx + 90},${cy}`, '#999');
    line(price, `${cx},${cy - ry} ${cx},${cy + ry}`, '#999');
});

// TE pane
const te = document.getElementById('te');
grid(te, [96, 163, 231]);
const steps = [
    [64, 67], [64, 67], [66, 69], [70, 73], [75, 83], [83, 101], [99, 119], [120, 143], [144, 163], [164, 194],
    [193, 225], [225, 256], [257, 282], [283, 299], [294, 299], [284, 293], [273, 284], [261, 272], [252, 260], [250, 253],
    [251, 253], [253, 256], [257, 260], [257, 261], [249, 256], [238, 247], [229, 236], [226, 229], [226, 228], [227, 229],
    [223, 226], [218, 223], [208, 217], [198, 209], [184, 191], [172, 183], [160, 171], [151, 160], [147, 152], [145, 148],
    [144, 147], [147, 150], [148, 150], [148, 150], [151, 154], [153, 158], [154, 159], [145, 153], [133, 141], [129, 132],
    [129, 132], [129, 134], [133, 137], [135, 138], [129, 136], [121, 129], [113, 121], [108, 113], [105, 108], [108, 111],
    [108, 110], [103, 109], [96, 102], [90, 96], [89, 92], [88, 90], [66, 89], [42, 64], [28, 40], [27, 29],
    [27, 39], [39, 62], [64, 80], [80, 89], [89, 94], [95, 101], [98, 102], [108, 116], [116, 124], [123, 128], [128, 130]
];
const stepColors = 'ggggggggggggggrrrrrrgggrrrrrggrrrrrrrrrgggrgggrrrrgggrrrrrrgrrrrrrrrrrggggggggggg';
[4, 9, 13, 17, 21, 25].forEach(period => {
    const k = 2 / (period + 1);
    let value = 66;
    steps.forEach(([top, bottom], i) => {
        const next = value + ((top + bottom) / 2 - value) * k;
        if (i) {
            line(te, `${x(i - 1)},${value} ${x(i)},${next}`, next > value ? '#007000' : '#800080', 1, { 'stroke-dasharray': '2 1' });
        }
        value = next;
    });
});
steps.forEach(([top, bottom], i) => rect(te, x(i) - 14, top, 28, bottom - top, COLORS[stepColors[i]]));
line(te, '183,66 333,68 420,80 500,95 600,127 700,151 800,163 900,176 1000,187 1200,197 1225,197', '#00ff00', 2);
line(te, '1225,197 1350,196 1450,190 1600,178 1750,173 2000,168 2200,157 2400,133 2480,126 2530,117 2600,107 2700,102 2770,103', '#ff00ff', 2);
line(te, '2770,103 2900,107 2986,111', '#00ff00', 2);

// MCD pane
const mcd = document.getElementById('mcd');
grid(mcd, [442, 543, 640]);
const floating = [
    448, 449, 448, 447, 480, 534, 548, 570, 573, 642, 650, 656, 657, 659, 647, 646, 646, 646, 645, 645,
    641, 641, 641, 640, 630, 630, 628, 628, 628, 632, 611, 603, 597, 593, 552, 546, 543, 537, 543, 544,
    533, 548, 545, 555, 552, 571, 478, 487, 525, 531, 491, 533, 509, 491, 483, 478, 484, 484, 486, 495,
    450, 462, 448, 475, 450, 450, 395, 413, 433, 433, 460, 488, 450, 457, 478, 480, 483, 490, 486, 476, 474
];
const profit = [
    604, 620, 605, 621, 638, 649, 651, 654, 656, 668, 685, 694, 698, 708, 682, 698, 698, 698, 698, 702,
    707, 711, 709, 696, 691, 693, 695, 696, 699, 700, 687, 676, 675, 671, 657, 660, 660, 664, 669, 671,
    675, 678, 677, 681, 682, 691, 666, 666, 675, 677, 672, 677, 674, 671, 668, 657, 666, 664, 657, 670,
    630, 640, 631, 654, 631, 630, 543, 579, 604, 602, 633, 655, 630, 639, 655, 665, 665, 665, 664, 664, 664
];
floating.forEach((mid, i) => {
    const left = x(i) - 15;
    rect(mcd, left, 340, 30, mid - 340, COLORS.g);
    rect(mcd, left, mid, 30, profit[i] - mid, COLORS.y);
    rect(mcd, left, profit[i], 30, 743 - profit[i], COLORS.r);
});
line(mcd, '183,543 2986,543', 'rgba(60,70,0,.7)');
line(mcd, '183,633 290,636 350,630 470,590 560,530 650,482 720,458 800,437 850,433 950,437 1200,451 1350,466 1500,505 1600,525 1700,537 1780,538 1900,550 2000,556 2090,577 2200,584 2350,604 2450,615 2520,630 2600,640 2750,637 2830,630 2900,615 2986,607', 'rgba(0,225,235,.65)');
line(mcd, '183,596 270,589 400,590 470,606 560,643 650,672 720,684 820,694 950,687 1200,676 1300,676 1400,663 1500,648 1600,634 1700,617 1770,613 1850,600 2000,590 2100,573 2200,570 2350,563 2500,567 2560,569 2750,571 2850,566 2986,560', 'rgba(235,40,190,.65)');
line(mcd, '183,596 300,602 430,627 600,657 700,678 830,694 1000,700 1200,697 1350,686 1500,672 1700,670 1860,677 2000,677 2100,668 2300,660 2400,653 2480,645 2560,628 2620,618 2770,617 2840,623 2900,640 2986,657', 'rgba(120,20,60,.7)');

// MACD pane
const macd = document.getElementById('macd');
grid(macd, [105, 176, 246]);
[193, 191, 186, 184, 191, 200, 207, 216, 219, 232, 242, 254, 259, 258, 234, 220, 207, 190, 178, 169,
 162, 160, 154, 145, 136, 128, 124, 122, 123, 124, 123, 119, 118, 114, 112, 111, 111, 112, 118, 123,
 128, 135, 139, 150, 157, 165, 158, 154, 160, 164, 165, 171, 172, 172, 169, 165, 168, 169, 169, 178,
 169, 168, 166, 171, 170, 172, 150, 145, 152, 156, 172, 186, 191, 196, 203, 210, 215, 219, 221, 217, 214
].forEach((end, i) => line(macd, `${x(i)},176 ${x(i)},${end}`, end > 176 ? '#a80000' : '#008000', 1, { 'shape-rendering': 'crispEdges' }));
line(macd, '183,211 240,213 320,216 400,232 470,250 560,290 640,314 700,309 800,298 900,282 960,275 1050,250 1200,222 1300,203 1400,175 1480,155 1600,143 1700,143 1760,148 1800,140 2000,142 2260,140 2330,131 2460,132 2500,118 2530,114 2600,114 2650,122 2740,137 2850,158 2920,174 2986,181', '#a00000');
line(macd, '183,201 290,205 380,213 470,226 560,248 640,272 720,287 800,292 900,289 1000,280 1100,263 1200,246 1300,224 1400,204 1500,182 1600,164 1700,154 1800,150 1950,144 2200,139 2400,133 2460,133 2550,123 2680,122 2780,130 2850,139 2900,147 2986,162', '#a0a000');

// RSI pane
const rsi = document.getElementById('rsi');
grid(rsi, [421, 482, 544]);
line(rsi, '168,442 3330,442', '#888');
const rsi24 = [
    474, 477, 471, 477, 485, 493, 494, 502, 503, 517, 525, 530, 530, 535, 508, 514, 513, 508, 508, 508,
    511, 513, 510, 501, 492, 492, 492, 492, 492, 492, 484, 476, 476, 470, 463, 462, 455, 454, 454, 457,
    451, 454, 454, 464, 458, 468, 438, 443, 453, 455, 450, 457, 453, 447, 442, 436, 441, 441, 441, 452,
    433, 437, 436, 443, 437, 436, 403, 418, 434, 433, 455, 461, 455, 458, 465, 470, 473, 479, 479, 473, 478
];
const rsi14 = [
    488, 494, 483, 490, 505, 518, 520, 529, 533, 551, 563, 569, 569, 573, 520, 530, 527, 520, 520, 521,
    524, 530, 517, 500, 490, 490, 489, 488, 488, 491, 472, 455, 454, 443, 426, 426, 416, 412, 421, 421,
    412, 421, 418, 443, 437, 464, 412, 417, 437, 442, 432, 446, 438, 430, 422, 413, 428, 427, 423, 450,
    412, 420, 418, 437, 424, 422, 376, 403, 430, 429, 458, 471, 460, 464, 477, 484, 486, 496, 496, 490, 493
];
const rsi9 = [
    490, 504, 485, 500, 521, 541, 545, 558, 562, 586, 597, 603, 605, 606, 522, 531, 526, 517, 517, 519,
    522, 533, 513, 487, 466, 464, 461, 460, 460, 468, 432, 409, 407, 393, 373, 373, 361, 358, 378, 378,
    367, 385, 380, 440, 427, 470, 392, 405, 435, 443, 429, 448, 439, 424, 413, 397, 424, 421, 415, 455,
    403, 416, 412, 441, 424, 422, 358, 394, 433, 432, 472, 489, 469, 475, 492, 504, 508, 521, 521, 507, 513
];
line(rsi, series(rsi24), '#aaa');
line(rsi, series(rsi9), '#a00000');
line(rsi, series(rsi14), '#a89800');

// Chip profile beside the price pane: last row of the band, width
const profile = document.getElementById('profile');
const bands = [
    [235, 16], [250, 30], [275, 20], [298, 45], [318, 50], [335, 60], [342, 85], [350, 110], [362, 157], [376, 142],
    [393, 172], [399, 200], [405, 172], [412, 128], [420, 143], [426, 115], [431, 65], [440, 50], [458, 18]
];
for (let y = 147, band = 0, n = 0; y < 458; y += 3, n++) {
    while (y >= bands[band][0]) band++;
    const width = bands[band][1];
    rect(profile, 1133 - width, y, width, 3, n % 4 === 1 ? '#b8b800' : n % 2 ? '#6c6c00' : '#858500');
}
```
